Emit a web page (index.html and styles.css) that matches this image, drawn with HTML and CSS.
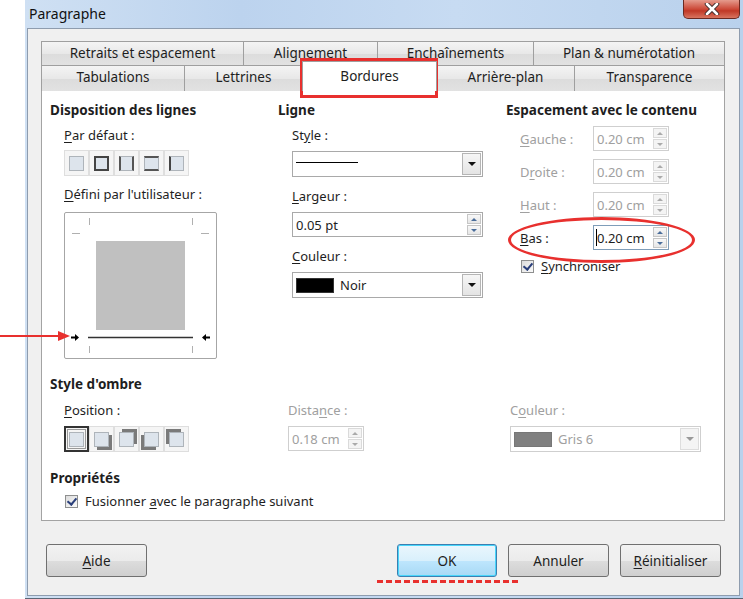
FILE: index.html
```html
<!DOCTYPE html>
<html lang="fr">
<head>
  <meta charset="UTF-8" />
  <title>Paragraphe</title>
  <link rel="stylesheet" href="styles.css">
</head>
<body>
  <div class="window">
    <div class="titlebar">
      <span class="title">Paragraphe</span>
      <div class="close-btn">
        <svg width="20" height="12" viewBox="0 0 20 12">
          <path d="M5 1 L15 11 M15 1 L5 11" stroke="#3a2a2a" stroke-width="4.5" stroke-linecap="round"/>
          <path d="M5 1 L15 11 M15 1 L5 11" stroke="#fff" stroke-width="2.6" stroke-linecap="round"/>
        </svg>
      </div>
    </div>

    <div class="client">
      <div class="tabs">
        <div class="tab-row row-back">
          <div class="tab">Retraits et espacement</div>
          <div class="tab">Alignement</div>
          <div class="tab">Enchaînements</div>
          <div class="tab">Plan &amp; numérotation</div>
        </div>
        <div class="tab-row row-front">
          <div class="tab">Tabulations</div>
          <div class="tab">Lettrines</div>
          <div class="tab active">Bordures</div>
          <div class="tab">Arrière-plan</div>
          <div class="tab">Transparence</div>
        </div>
      </div>

      <div class="panel">
        <div class="top-section">
          <!-- line arrangement -->
          <div class="col col-lines">
            <h3>Disposition des lignes</h3>
            <div class="indent">
              <div class="label"><u>P</u>ar défaut :</div>
              <div class="presets">
                <span class="preset"><i class="sq"></i></span>
                <span class="preset"><i class="sq b-all"></i></span>
                <span class="preset"><i class="sq b-lr"></i></span>
                <span class="preset"><i class="sq b-tb"></i></span>
                <span class="preset"><i class="sq b-l"></i></span>
              </div>
              <div class="label user-label"><u>D</u>éfini par l'utilisateur :</div>
              <div class="preview">
                <svg width="153" height="147" viewBox="0 0 153 147">
                  <g stroke="#b0b0b0" stroke-width="1">
                    <path d="M25.5 6 V13 M128.5 6 V13"/>
                    <path d="M8 21.5 H16 M137 21.5 H145"/>
                    <path d="M25.5 134 V141 M128.5 134 V141"/>
                  </g>
                  <rect x="32" y="29" width="89" height="89" fill="#c0c0c0"/>
                  <path d="M24 125.5 H129" stroke="#333" stroke-width="1.5"/>
                  <path d="M7 125.5 H12" stroke="#000" stroke-width="2"/>
                  <path d="M11 122 L15 125.5 L11 129 Z" fill="#000"/>
                  <path d="M141 125.5 H146" stroke="#000" stroke-width="2"/>
                  <path d="M142 122 L138 125.5 L142 129 Z" fill="#000"/>
                </svg>
              </div>
            </div>
          </div>

          <!-- line style -->
          <div class="col col-line">
            <h3>Ligne</h3>
            <div class="indent">
              <div class="label">St<u>y</u>le :</div>
              <div class="listbox wide">
                <span class="line-sample"></span>
                <span class="drop"><i class="tri"></i></span>
              </div>
              <div class="label"><u>L</u>argeur :</div>
              <div class="spin wide">
                <span class="value">0.05 pt</span>
                <span class="spin-btns"><i class="up"></i><i class="down"></i></span>
              </div>
              <div class="label"><u>C</u>ouleur :</div>
              <div class="listbox wide">
                <span class="swatch black"></span>
                <span class="value">Noir</span>
                <span class="drop"><i class="tri"></i></span>
              </div>
            </div>
          </div>

          <!-- spacing to contents -->
          <div class="col col-spacing">
            <h3>Espacement avec le contenu</h3>
            <div class="indent">
              <div class="spacing-row disabled">
                <span class="row-label"><u>G</u>auche :</span>
                <div class="spin small"><span class="value">0.20 cm</span><span class="spin-btns"><i class="up"></i><i class="down"></i></span></div>
              </div>
              <div class="spacing-row disabled">
                <span class="row-label">D<u>r</u>oite :</span>
                <div class="spin small"><span class="value">0.20 cm</span><span class="spin-btns"><i class="up"></i><i class="down"></i></span></div>
              </div>
              <div class="spacing-row disabled">
                <span class="row-label"><u>H</u>aut :</span>
                <div class="spin small"><span class="value">0.20 cm</span><span class="spin-btns"><i class="up"></i><i class="down"></i></span></div>
              </div>
              <div class="spacing-row">
                <span class="row-label"><u>B</u>as :</span>
                <div class="spin small focus"><span class="value"><b class="caret"></b>0.20 cm</span><span class="spin-btns"><i class="up"></i><i class="down"></i></span></div>
              </div>
              <label class="check sync"><span class="box"></span><span><u>S</u>ynchroniser</span></label>
            </div>
          </div>
        </div>

        <!-- shadow -->
        <h3>Style d'ombre</h3>
        <div class="shadow-row">
          <div class="shadow-col">
            <div class="label"><u>P</u>osition :</div>
            <div class="presets">
              <span class="preset selected"><i class="sq"></i></span>
              <span class="preset"><i class="sq sh-br"></i></span>
              <span class="preset"><i class="sq sh-tr"></i></span>
              <span class="preset"><i class="sq sh-bl"></i></span>
              <span class="preset"><i class="sq sh-tl"></i></span>
            </div>
          </div>
          <div class="shadow-col disabled">
            <div class="label">Dista<u>n</u>ce :</div>
            <div class="spin small"><span class="value">0.18 cm</span><span class="spin-btns"><i class="up"></i><i class="down"></i></span></div>
          </div>
          <div class="shadow-col disabled">
            <div class="label">C<u>o</u>uleur :</div>
            <div class="listbox shadow-color">
              <span class="swatch grey"></span>
              <span class="value">Gris 6</span>
              <span class="drop"><i class="tri"></i></span>
            </div>
          </div>
        </div>

        <h3>Propriétés</h3>
        <label class="check merge"><span class="box"></span><span>Fusionner <u>a</u>vec le paragraphe suivant</span></label>
      </div>

      <div class="buttons">
        <button class="btn"><u>A</u>ide</button>
        <span class="spacer"></span>
        <button class="btn default">OK</button>
        <button class="btn">Annuler</button>
        <button class="btn"><u>R</u>éinitialiser</button>
      </div>
    </div>
  </div>

  <!-- red annotations drawn over the dialog -->
  <div class="mark-tab"></div>
  <div class="mark-ellipse"></div>
  <div class="mark-ok"></div>
  <svg class="mark-arrow" width="72" height="12" viewBox="0 0 72 12">
    <path d="M0 6 H60" stroke="#e8302e" stroke-width="2"/>
    <path d="M58 1 L70 6 L58 11 Z" fill="#e8302e"/>
  </svg>
</body>
</html>
```

FILE: styles.css
```css
body {
  margin: 0;
  width: 743px;
  height: 599px;
  background: #fff;
  font-family: 'Noto Sans', 'Open Sans', sans-serif;
  font-size: 13px;
  color: #1e1e1e;
  position: relative;
  overflow: hidden;
}

u {
  text-decoration: underline;
  text-underline-offset: 2px;
}

.window {
  margin-left: 25px;
  width: 718px;
  height: 598px;
  background: linear-gradient(90deg, #cfe0f3 0%, #bcd3ee 30%, #c7dbf2 60%, #b9d1ec 100%);
  border-bottom: 1px solid #5b6675;
  display: flex;
  flex-direction: column;
}

.titlebar {
  height: 28px;
  display: flex;
  align-items: flex-start;
  justify-content: space-between;
  flex-shrink: 0;
}

.title {
  margin: 4px 0 0 4px;
  font-size: 14px;
  color: #111;
}

.close-btn {
  width: 55px;
  height: 18px;
  margin-right: 3px;
  border: 1px solid #6b2a22;
  border-top: none;
  border-radius: 0 0 5px 5px;
  background: linear-gradient(#e59b8d, #cc4a39 50%, #c03826 60%, #d8745f);
  display: flex;
  align-items: center;
  justify-content: center;
}

.client {
  flex: 1;
  margin: 0 3px 2px 2px;
  background: #f0f0f0;
  border: 1px solid #8e9cae;
  padding: 12px 13px 0 13px;
  display: flex;
  flex-direction: column;
}

/* tabs */
.tabs {
  width: 684px;
  position: relative;
}

.tab-row {
  display: grid;
  height: 24px;
}

.row-back {
  grid-template-columns: 202px 134px 156px 192px;
}

.row-front {
  grid-template-columns: 143px 118px 134px 138px 151px;
}

.tab {
  border: 1px solid #9f9f9f;
  border-bottom: none;
  margin-right: -1px;
  background: linear-gradient(#f4f4f4, #e8e8e8 50%, #dcdcdc 51%, #e2e2e2);
  text-align: center;
  line-height: 23px;
  font-size: 13.5px;
}

.tab-row .tab:last-child {
  margin-right: 0;
}

.tab.active {
  background: #fff;
  margin-top: -4px;
  height: 29px;
  position: relative;
  z-index: 1;
  line-height: 29px;
  border-color: #9f9f9f;
}

.panel {
  width: 684px;
  height: 432px;
  box-sizing: border-box;
  background: #fff;
  border: 1px solid #a3a3a3;
  padding: 3px 0 0 8px;
}

h3 {
  margin: 0;
  font-size: 13.5px;
  font-weight: bold;
  line-height: 20px;
}

.label {
  line-height: 20px;
  margin-top: 5px;
  margin-bottom: 5px;
}

.indent {
  padding-left: 14px;
}

.top-section {
  display: flex;
  margin-top: 7px;
  height: 274px;
}

.col-lines { width: 228px; }
.col-line { width: 228px; }
.col-spacing { flex: 1; }

/* preset buttons */
.presets {
  display: flex;
  gap: 0;
}

.preset {
  width: 25px;
  height: 26px;
  box-sizing: border-box;
  border: 1px solid #dedede;
  background: #f5f5f5;
  display: flex;
  align-items: center;
  justify-content: center;
}

.preset .sq {
  width: 15px;
  height: 15px;
  box-sizing: border-box;
  background: #dde4ec;
  border: 1px solid #aeb4ba;
  position: relative;
}

.sq.b-all { border: 2px solid #444; }
.sq.b-lr { border-left: 2px solid #555; border-right: 2px solid #555; }
.sq.b-tb { border-top: 2px solid #555; border-bottom: 2px solid #555; }
.sq.b-l { border-left: 2px solid #444; }

.preset.selected {
  border: 2px solid #333;
  outline: 1px solid #999;
  outline-offset: -4px;
}

.sq.sh-br { box-shadow: 3px 3px 0 #7a7a7a; }
.sq.sh-tr { box-shadow: 3px -3px 0 #7a7a7a; }
.sq.sh-bl { box-shadow: -3px 3px 0 #7a7a7a; }
.sq.sh-tl { box-shadow: -3px -3px 0 #7a7a7a; }

.label.user-label {
  margin-top: 8px;
  margin-bottom: 3px;
}

.preview {
  width: 153px;
  height: 147px;
  box-sizing: border-box;
  border: 1px solid #a6a6a6;
  border-radius: 2px;
  margin-top: 8px;
  overflow: hidden;
}

.preview svg {
  display: block;
  margin: -1px;
}

/* fields */
.listbox, .spin {
  height: 25px;
  box-sizing: border-box;
  border: 1px solid #a9a9a9;
  background: #fff;
  display: flex;
  align-items: center;
}

.listbox {
  height: 26px;
}

.wide {
  width: 191px;
}

.col-line .indent {
  display: flex;
  flex-direction: column;
  align-items: flex-start;
}

.col-line .label {
  margin-top: 5px;
  margin-bottom: 6px;
}

.col-line .listbox, .col-line .spin {
  margin-bottom: 4px;
}

.line-sample {
  width: 62px;
  height: 1px;
  background: #000;
  margin-left: 3px;
  align-self: flex-start;
  margin-top: 10px;
}

.drop {
  margin-left: auto;
  width: 19px;
  height: 22px;
  margin-right: 1px;
  box-sizing: border-box;
  border: 1px solid #b5b5b5;
  background: linear-gradient(#f6f6f6, #e4e4e4);
  display: flex;
  align-items: center;
  justify-content: center;
}

.tri {
  width: 0;
  height: 0;
  border-left: 4px solid transparent;
  border-right: 4px solid transparent;
  border-top: 4px solid #111;
}

.value {
  padding-left: 3px;
  white-space: nowrap;
  position: relative;
}

.swatch {
  width: 38px;
  height: 15px;
  margin-left: 3px;
  box-sizing: border-box;
}

.swatch.black { background: #000; border: 1px solid #333; }
.swatch.grey { background: #808080; border: 1px solid #777; }
.swatch + .value { padding-left: 6px; }

.spin .value { flex: 1; }

.spin-btns {
  width: 14px;
  height: 21px;
  margin-right: 1px;
  display: flex;
  flex-direction: column;
  gap: 1px;
}

.spin-btns i {
  flex: 1;
  box-sizing: border-box;
  border: 1px solid #c6c6c6;
  background: linear-gradient(#f8f8f8, #e6e6e6);
  position: relative;
}

.spin-btns i::after {
  content: '';
  position: absolute;
  left: 3px;
  top: 3px;
  border-left: 3px solid transparent;
  border-right: 3px solid transparent;
}

.spin-btns .up::after { border-bottom: 3px solid #4a6d9a; }
.spin-btns .down::after { border-top: 3px solid #4a6d9a; }

.spin.small {
  width: 76px;
}

/* spacing column */
.col-spacing .indent {
  padding-top: 2px;
}

.spacing-row {
  display: flex;
  align-items: center;
  height: 33px;
}

.row-label {
  width: 73px;
}

.disabled {
  color: #a0a0a0;
}

.disabled .spin, .disabled .listbox {
  border-color: #cfcfcf;
}

.disabled .spin-btns i {
  border-color: #dadada;
  background: #f4f4f4;
}

.disabled .spin-btns .up::after { border-bottom-color: #aaa; }
.disabled .spin-btns .down::after { border-top-color: #aaa; }
.disabled .drop { border-color: #ddd; background: #f4f4f4; }
.disabled .tri { border-top-color: #999; }

.spin.focus {
  border-color: #7f9db9;
}

.caret {
  position: absolute;
  left: 2px;
  top: 0;
  width: 1px;
  height: 17px;
  background: #000;
}

.check {
  display: flex;
  align-items: center;
  line-height: 20px;
}

.check .box {
  width: 13px;
  height: 13px;
  box-sizing: border-box;
  border: 1px solid #8e8f8f;
  background: linear-gradient(135deg, #dcdcdc, #fafafa);
  margin-right: 7px;
  position: relative;
}

.check .box::after {
  content: '';
  position: absolute;
  left: 3px;
  top: 0;
  width: 4px;
  height: 7px;
  border-right: 2px solid #2a3f7a;
  border-bottom: 2px solid #2a3f7a;
  transform: rotate(40deg);
}

.sync {
  margin-top: 2px;
  margin-left: 1px;
}

/* shadow + properties */
.shadow-row {
  display: flex;
  padding-left: 14px;
  height: 72px;
  margin-bottom: 2px;
}

.shadow-row .label {
  margin-top: 6px;
  margin-bottom: 6px;
}

.shadow-col:nth-child(1) { width: 224px; }
.shadow-col:nth-child(2) { width: 222px; }

.shadow-color {
  width: 191px;
}

.merge {
  margin-left: 15px;
  margin-top: 3px;
}

/* dialog buttons */
.buttons {
  display: flex;
  gap: 11px;
  margin-top: 23px;
  padding-left: 5px;
  width: 675px;
}

.spacer {
  flex: 1;
}

.btn {
  width: 101px;
  height: 33px;
  border: 1px solid #707070;
  border-radius: 3px;
  background: linear-gradient(#f2f2f2, #ebebeb 50%, #dddddd 51%, #cfcfcf);
  font-family: inherit;
  font-size: 13.5px;
  color: #1e1e1e;
  padding: 0;
}

.btn.default {
  width: 100px;
  border-color: #3c7fb1;
  background: linear-gradient(#eaf6fd, #d9f0fc 50%, #bee6fd 51%, #a7d9f5);
  box-shadow: inset 0 0 0 1px #48d6fb;
}

/* red annotations */
.mark-tab {
  position: absolute;
  left: 300px;
  top: 58px;
  width: 132px;
  height: 34px;
  border: 3px solid #e8302e;
}

.mark-ellipse {
  position: absolute;
  left: 508px;
  top: 217px;
  width: 181px;
  height: 40px;
  border: 3px solid #e8302e;
  border-radius: 50%;
}

.mark-ok {
  position: absolute;
  left: 377px;
  top: 580px;
  width: 141px;
  border-top: 3px dashed #e8302e;
}

.mark-arrow {
  position: absolute;
  left: 0;
  top: 330px;
}
```
